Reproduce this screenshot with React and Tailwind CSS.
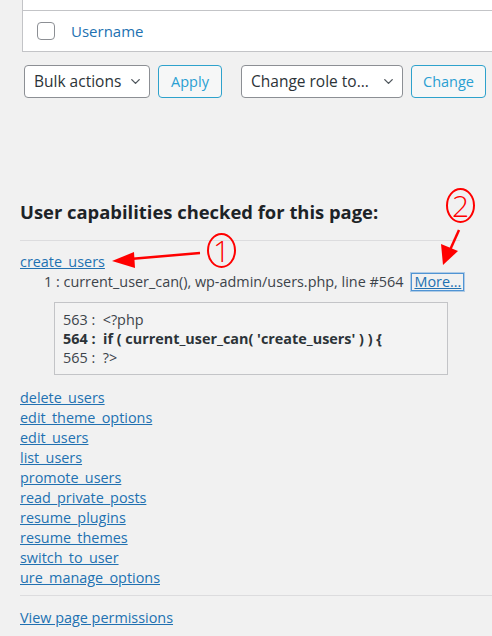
import { ChevronDown } from 'lucide-react'

const caps = [
  'delete_users',
  'edit_theme_options',
  'edit_users',
  'list_users',
  'promote_users',
  'read_private_posts',
  'resume_plugins',
  'resume_themes',
  'switch_to_user',
  'ure_manage_options',
]

function Select({ label, width }) {
  return (
    <div
      className={`flex h-[33px] items-center justify-between rounded-[4px] border border-[#8c8f94] bg-white pl-[9px] pr-[6px] text-[15.5px] text-[#2c3338] ${width}`}
    >
      <span>{label}</span>
      <ChevronDown className="h-[15px] w-[15px] text-[#50575e]" strokeWidth={2.2} />
    </div>
  )
}

function Button({ label, width }) {
  return (
    <div
      className={`flex h-[33px] items-center justify-center rounded-[4px] border border-[#2ea2cc] bg-[#f6f7f7] text-[14.5px] text-[#2a9fd2] ${width}`}
    >
      {label}
    </div>
  )
}

function Marker({ n, className }) {
  return (
    <div
      className={`absolute flex h-[35px] w-[29px] items-center justify-center rounded-[50%] border-2 border-[#ff0000] text-[30px] font-light leading-none text-[#ff0000] ${className}`}
    >
      {n}
    </div>
  )
}

export default function App() {
  return (
    <div
      className="relative h-[636px] w-[492px] overflow-hidden bg-[#f1f1f1] text-[14.4px] text-[#3c434a]"
      style={{ fontFamily: '"Open Sans", "Noto Sans", sans-serif' }}
    >
      {/* users table tail */}
      <div className="ml-[22px] border-b border-l border-[#c3c4c7] bg-white">
        <div className="h-[11px] border-b border-[#c3c4c7]" />
        <div className="flex h-[40px] items-center">
          <div className="ml-[14px] h-[18px] w-[18px] rounded-[4px] border border-[#8c8f94] bg-white" />
          <span className="ml-[16px] text-[15px] text-[#2271b1]">Username</span>
        </div>
      </div>

      <div className="ml-[24px] mt-[13px] flex items-center">
        <Select label="Bulk actions" width="w-[126px]" />
        <Button label="Apply" width="ml-[8px] w-[64px]" />
        <Select label="Change role to…" width="ml-[19px] w-[162px]" />
        <Button label="Change" width="ml-[8px] w-[75px]" />
      </div>

      {/* capabilities panel */}
      <div className="pl-[20px]">
        <h2 className="mt-[104px] text-[18.4px] font-bold leading-[20px] text-[#1d2327]">
          User capabilities checked for this page:
        </h2>
        <div className="mr-[32px] mt-[18px] border-t border-[#dcdcde]" />

        <div className="mt-[11px] leading-[20px]">
          <a className="text-[#2271b1] underline">create_users</a>
        </div>
        <div className="flex items-center pl-[24px] leading-[20px]">
          <span>1 : current_user_can(), wp-admin/users.php, line #564</span>
          <a className="ml-[8px] border border-[#4f94d4] px-[2px] leading-[16px] text-[#2271b1] underline shadow-[0_0_0_1px_rgba(79,148,212,0.4)]">
            More...
          </a>
        </div>

        <div className="ml-[34px] mt-[10px] w-[394px] border border-[#c3c4c7] bg-[#f3f3f3] px-[8px] py-[7px] leading-[19px] text-[#3c434a]">
          <div>563 :&nbsp; &lt;?php</div>
          <div className="font-bold text-[#2c3338]">564 :&nbsp; if ( current_user_can( 'create_users' ) ) {'{'}</div>
          <div>565 :&nbsp; ?&gt;</div>
        </div>

        <ul className="mt-[13px] leading-[20px]">
          {caps.map((cap) => (
            <li key={cap}>
              <a className="text-[#2271b1] underline">{cap}</a>
            </li>
          ))}
        </ul>

        <div className="mt-[7px] border-t border-[#dcdcde]" />
        <div className="mt-[12px] leading-[20px]">
          <a className="text-[#2271b1] underline">View page permissions</a>
        </div>
      </div>

      {/* red annotations */}
      <Marker n="1" className="left-[207px] top-[233px]" />
      <Marker n="2" className="left-[446px] top-[188px]" />
      <svg className="pointer-events-none absolute inset-0" width="492" height="636">
        <line x1="200" y1="253" x2="130" y2="259" stroke="#ff0000" strokeWidth="2.5" />
        <polygon points="112,261 134,252 135,268" fill="#ff0000" />
        <line x1="459" y1="230" x2="450" y2="250" stroke="#ff0000" strokeWidth="2.5" />
        <polygon points="443,265 441,244 458,251" fill="#ff0000" />
      </svg>
    </div>
  )
}
